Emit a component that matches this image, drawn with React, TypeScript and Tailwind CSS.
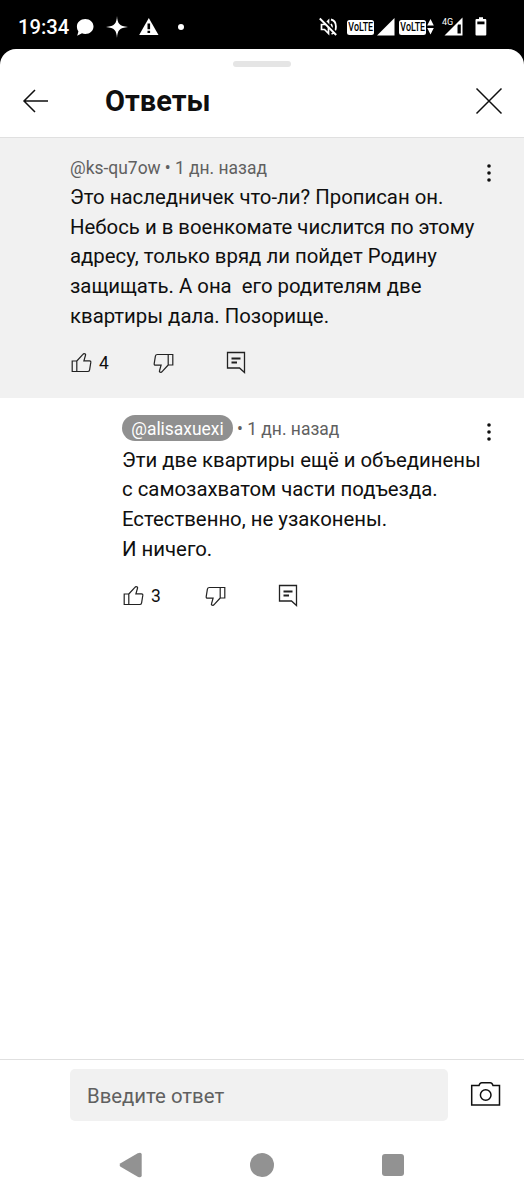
interface CommentData {
  author: string;
  time: string;
  lines: string[];
  likes: number;
  isReply?: boolean;
}

const COMMENTS: CommentData[] = [
  {
    author: "@ks-qu7ow",
    time: "1 дн. назад",
    lines: [
      "Это наследничек что-ли? Прописан он.",
      "Небось и в военкомате числится по этому",
      "адресу, только вряд ли пойдет Родину",
      "защищать. А она  его родителям две",
      "квартиры дала. Позорище.",
    ],
    likes: 4,
  },
  {
    author: "@alisaxuexi",
    time: "1 дн. назад",
    lines: [
      "Эти две квартиры ещё и объединены",
      "с самозахватом части подъезда.",
      "Естественно, не узаконены.",
      "И ничего.",
    ],
    likes: 3,
    isReply: true,
  },
];

function VolteBadge() {
  return (
    <div className="flex h-[15px] w-[27px] shrink-0 items-center justify-center rounded-[2.5px] bg-white">
      <span className="scale-x-[0.74] whitespace-nowrap text-[12px] font-medium leading-[15px] text-black">VoLTE</span>
    </div>
  );
}

function StatusBar() {
  return (
    <div className="flex h-[49px] shrink-0 items-start pl-[18px] pt-[14px] text-white">
      <span className="w-[52px] whitespace-nowrap text-[20.2px] font-medium leading-[26px]">
        19:34
      </span>
      <svg className="ml-1.5 mt-1 h-[19px] w-[19px]" viewBox="0 0 19 19" fill="#fff">
        <path d="M9.3 1C14 1 17.5 4.2 17.5 8.5S14 16 9.3 16C7.9 16 6.9 15.7 6 15.3L1.2 17.7L2.4 13.4C1.4 12 .9 10.4.9 8.5C.9 4.2 4.6 1 9.3 1Z" />
      </svg>
      <svg className="ml-[11px] mt-[1px] h-[24px] w-[24px]" viewBox="0 0 24 24" fill="#fff">
        <path d="M11 1C11.6 8.7 13.3 11.1 22 12C13.3 12.9 11.6 15.3 11 23C10.4 15.3 8.7 12.9 0 12C8.7 11.1 10.4 8.7 11 1Z" />
      </svg>
      <svg className="ml-[9px] mt-[3px] h-[19px] w-[20px]" viewBox="0 0 20 19">
        <path d="M9.8 1L19.5 18H.2Z" fill="#fff" />
        <path d="M9.8 6.5V12.3M9.8 13.8V16" stroke="#000" strokeWidth="2.6" />
      </svg>
      <span className="ml-[19px] mt-[10px] h-[6px] w-[6px] rounded-full bg-white" />

      <svg className="ml-[135px] mt-[3px] h-5 w-5" viewBox="0 0 20 20" fill="none">
        <path d="M2.5 7.5H5.5L9.5 3.5V16.5L5.5 12.5H2.5Z" stroke="#fff" strokeWidth="1.7" />
        <path d="M12 7C13.3 8.5 13.3 11.5 12 13M12 2.5C18.5 4 18.5 15 12.5 17" stroke="#fff" strokeWidth="1.8" />
        <path d="M2.5 1L19 17.5" stroke="#000" strokeWidth="2.2" />
        <path d="M.8 1.5L17.2 18" stroke="#fff" strokeWidth="1.9" />
      </svg>
      <div className="ml-2 mt-[6px] flex">
        <VolteBadge />
        <svg className="-mt-[2px] ml-[3px] h-[18px] w-[18px]" viewBox="0 0 18 18">
          <path d="M17.5 0V17.5H0Z" fill="#fff" />
        </svg>
        <div className="ml-1 flex">
          <VolteBadge />
          <svg className="-mt-px ml-px h-4 w-[7px]" viewBox="0 0 7 16" fill="#fff">
            <path d="M3.5 0L6.8 6.5H.2ZM.2 9H6.8L3.5 15.5Z" />
          </svg>
        </div>
      </div>
      <svg className="ml-[7px] mt-[2px] h-[21px] w-[22px]" viewBox="0 0 22 21">
        <path d="M21.5 1.5V19.5H3.5Z" fill="#fff" />
        <path d="M17 8.5H19.8V17.5H16.5V10Z" fill="#000" />
        <text x="1" y="9.3" fontFamily="Roboto, sans-serif" fontSize="9" fill="#fff" stroke="#000" strokeWidth="1.5" paintOrder="stroke">
          4G
        </text>
      </svg>
      <svg className="ml-3 mt-[3px] h-[19px] w-3" viewBox="0 0 12 19">
        <path d="M4 .3H8V2H10.3Q11.3 2 11.3 3V17.5Q11.3 18.5 10.3 18.5H1.5Q.5 18.5.5 17.5V3Q.5 2 1.5 2H4Z" fill="#fff" />
        <path d="M2.3 4.5H9.5V7.3H2.3Z" fill="#000" />
      </svg>
    </div>
  );
}

function ThumbIcon({ down = false }: { down?: boolean }) {
  return (
    <svg
      className={down ? "h-6 w-6 shrink-0 rotate-180" : "h-6 w-6 shrink-0"}
      viewBox="0 0 24 24"
      fill="none"
      stroke="#222"
      strokeWidth="1.2"
    >
      <path d="M6.8 10L12.9 3.4Q13.6 2.5 14.8 2.8Q15.9 3.1 15.5 4.3L13.9 9.8H19.5Q21 9.9 20.8 11.4L19.6 18.8Q19.3 20.5 17.6 20.5H6.8ZM6.8 10H2.2V20.5H6.8" />
    </svg>
  );
}

function ReplyIcon() {
  return (
    <svg className="h-6 w-6" viewBox="0 0 24 24" fill="none" stroke="#222">
      <path d="M3.5 2.5H20.5V22.5L15.5 18H3.5Z" strokeWidth="1.3" />
      <path d="M7.5 8.5H16.5M7.5 12.5H13" strokeWidth="1.8" />
    </svg>
  );
}

function MoreIcon() {
  return (
    <svg className="h-[18px] w-1" viewBox="0 0 4 18" fill="#0f0f0f">
      <circle cx="2" cy="2" r="1.8" />
      <circle cx="2" cy="9" r="1.8" />
      <circle cx="2" cy="16" r="1.8" />
    </svg>
  );
}

function Comment({ comment }: { comment: CommentData }) {
  const { author, time, lines, likes, isReply } = comment;

  return (
    <article
      className={
        isReply
          ? "flex h-[234px] justify-between pl-[122px] pr-[33px] pt-[17px]"
          : "flex h-[260px] justify-between bg-[#f1f1f1] pl-[70px] pr-[33px] pt-[17px]"
      }
    >
      <div className="w-0 whitespace-nowrap">
        <div className="flex h-[27px] items-center text-[17.45px] text-[#606060]">
          {isReply ? (
            <span className="mr-1 flex h-[26px] w-[111px] shrink-0 items-center justify-center rounded-full bg-[#909090] pt-[2px] text-white">
              {author}
            </span>
          ) : (
            <span className="mr-1">{author}</span>
          )}
          <span className={isReply ? "pt-[2px]" : ""}>• {time}</span>
        </div>
        <div className={isReply ? "mt-1" : "mt-[1.3px]"}>
          {lines.map((line) => (
            <p className="h-[29.8px] whitespace-pre text-[20.35px] leading-[29.8px] text-[#0f0f0f]" key={line}>
              {line}
            </p>
          ))}
        </div>
        <div className="mt-[19.7px] flex">
          <ThumbIcon />
          <span className="ml-[5px] w-[52px] shrink-0 text-[17.45px] leading-6 text-[#0f0f0f]">{likes}</span>
          <ThumbIcon down />
          <span className="-mt-[1.5px] ml-[49px] shrink-0">
            <ReplyIcon />
          </span>
        </div>
      </div>
      <div className={isReply ? "pt-[8.5px]" : "pt-[9px]"}>
        <MoreIcon />
      </div>
    </article>
  );
}

function Header() {
  return (
    <header className="flex h-[88.5px] shrink-0 flex-col border-b border-[#e0e0e0]">
      <div className="mt-[11.5px] h-[6px] w-[58px] self-center rounded-full bg-[#e5e5e5]" />
      <div className="mt-[16.5px] flex h-9 items-center pl-[22px] pr-[21px]">
        <svg className="h-7 w-7" viewBox="0 0 28 28" fill="none" stroke="#0f0f0f" strokeWidth="1.5">
          <path d="M26 14H2M13 3L2 14L13 25" />
        </svg>
        <h1 className="ml-[55px] flex-1 text-[29px] font-bold leading-9 text-[#0f0f0f]">Ответы</h1>
        <svg className="h-7 w-7" viewBox="0 0 28 28" fill="none" stroke="#0f0f0f" strokeWidth="1.5">
          <path d="M1.5 1.5L26.5 26.5M26.5 1.5L1.5 26.5" />
        </svg>
      </div>
    </header>
  );
}

function ReplyBar() {
  return (
    <div className="flex h-[71px] shrink-0 items-start border-t border-[#e0e0e0] pl-[70px] pt-[9px]">
      <div className="flex h-[52px] w-[378px] items-center rounded-[5px] bg-[#f1f1f1] pl-[17px] pt-[3px] text-[20.35px] text-[#606060]">
        Введите ответ
      </div>
      <svg className="ml-[22px] mt-[12px] h-[26px] w-8" viewBox="0 0 32 26" fill="none" stroke="#0f0f0f" strokeWidth="1.5">
        <path d="M1.7 4.5H9Q10 1.7 11.7 1.7H20.3Q22 1.7 23 4.5H29.5V24H1.7Z" />
        <circle cx="15.7" cy="14" r="5.3" />
      </svg>
    </div>
  );
}

function NavigationBar() {
  return (
    <nav className="flex h-[70px] shrink-0 items-center justify-between pl-[119px] pr-[120px]">
      <svg className="h-[26px] w-[23px]" viewBox="0 0 23 26" fill="#929292">
        <path d="M1.6 11.2L18.7 1.2Q22.7-.3 22.7 2.5V23.5Q22.7 26.3 18.7 24.8L1.6 14.8Q-.3 13 1.6 11.2Z" />
      </svg>
      <span className="h-[24px] w-[24px] rounded-full bg-[#929292]" />
      <span className="h-[22px] w-[22px] rounded-[3px] bg-[#929292]" />
    </nav>
  );
}

export default function App() {
  return (
    <div className="flex h-[1200px] w-[524px] flex-col overflow-hidden bg-black font-[Roboto,sans-serif]">
      <StatusBar />
      <div className="flex flex-1 flex-col rounded-t-[16px] bg-white">
        <Header />
        <main className="flex-1">
          {COMMENTS.map((comment) => (
            <Comment comment={comment} key={comment.author} />
          ))}
        </main>
        <ReplyBar />
        <NavigationBar />
      </div>
    </div>
  );
}
